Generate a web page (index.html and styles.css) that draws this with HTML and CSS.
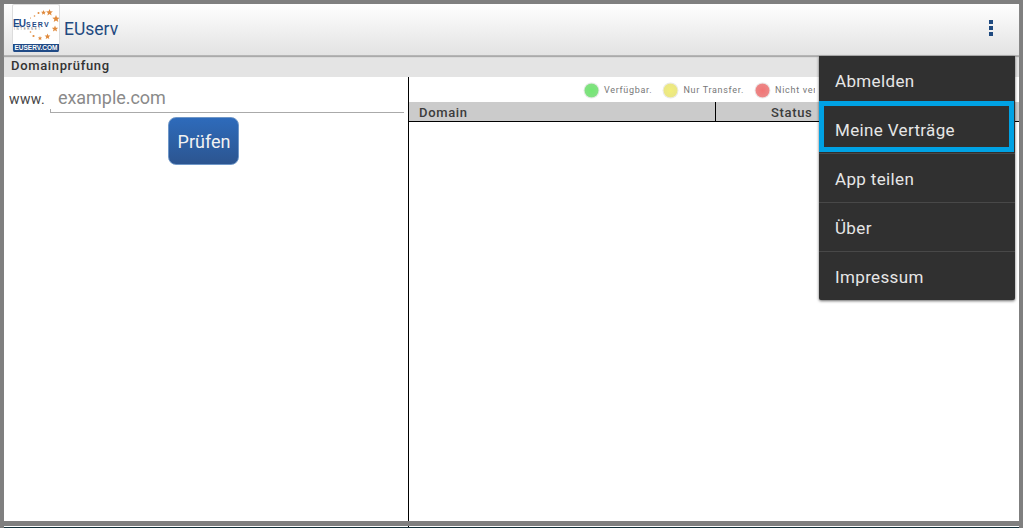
FILE: index.html
```html
<!DOCTYPE html>
<html lang="de">
<head>
<meta charset="utf-8">
<title>EUserv</title>
<link rel="stylesheet" href="styles.css">
</head>
<body>
<div class="screen">
  <header class="actionbar">
    <div class="logo">
      <div class="logo-main">
        <svg class="logo-stars" viewBox="0 0 48 40" width="48" height="40" aria-hidden="true">
          <g fill="#e08a3c">
            <path d="M37.5 5l.9 2.3 2.5.1-1.9 1.6.6 2.4-2.1-1.3-2.1 1.3.6-2.4-1.9-1.6 2.5-.1z"/>
            <path d="M31.5 6l.7 1.7 1.8.1-1.4 1.2.5 1.8-1.6-1-1.6 1 .5-1.8-1.4-1.2 1.8-.1z"/>
            <path d="M44 11l1 2.500 2.700.2-2.100 1.700.7 2.600-2.300-1.400-2.300 1.400.7-2.600-2.100-1.700 2.700-.2z"/>
            <path d="M43 21.500l.9 2.200 2.400.1-1.900 1.500.7 2.300-2.100-1.300-2.100 1.300.7-2.300-1.900-1.500 2.400-.1z"/>
            <path d="M35.500 29.500l.8 2 2.100.1-1.600 1.400.5 2-1.800-1.100-1.800 1.100.5-2-1.600-1.400 2.100-.1z"/>
            <path d="M28 32l.6 1.500 1.600.1-1.200 1 .4 1.600-1.400-.9-1.400.9.400-1.600-1.200-1 1.600-.1z"/>
            <circle cx="26.500" cy="9" r="1"/>
            <circle cx="22.500" cy="12" r=".8"/>
            <circle cx="18.500" cy="14" r=".6"/>
            <circle cx="21.500" cy="32" r="1.100"/>
            <circle cx="18.500" cy="28" r=".8"/>
          </g>
        </svg>
        <span class="logo-eu">EU</span><span class="logo-serv">SERV</span>
        <span class="logo-sub">INTERNET</span>
      </div>
      <div class="logo-foot">EUSERV.COM</div>
    </div>
    <span class="app-title">EUserv</span>
    <span class="overflow" aria-label="Menü"><i></i><i></i><i></i></span>
  </header>
  <div class="section-title">Domainprüfung</div>
  <main class="panes">
    <section class="left">
      <div class="domain-row">
        <span class="www">www.</span>
        <span class="field">example.com</span>
      </div>
      <div class="button-row"><span class="check">Prüfen</span></div>
    </section>
    <section class="right">
      <div class="legend">
        <span class="dot green"></span><span class="legend-text">Verfügbar.</span>
        <span class="dot yellow"></span><span class="legend-text">Nur Transfer.</span>
        <span class="dot red"></span><span class="legend-text clipped">Nicht verfügbar.</span>
      </div>
      <div class="table-head">
        <span class="col-domain">Domain</span>
        <span class="col-status">Status</span>
      </div>
    </section>
  </main>
  <nav class="menu">
    <div class="menu-item first">Abmelden</div>
    <div class="menu-item focused">Meine Verträge</div>
    <div class="menu-item">App teilen</div>
    <div class="menu-item">Über</div>
    <div class="menu-item">Impressum</div>
  </nav>
</div>
<div class="bottom-edge"><span class="edge-tick"></span></div>
</body>
</html>
```

FILE: styles.css
```css
* { box-sizing: border-box; }
html, body { margin: 0; height: 100%; overflow: hidden; }
body {
  width: 1023px;
  height: 528px;
  background: #7f7f7f;
  padding: 4px 4px 0;
  font-family: Roboto, "Liberation Sans", sans-serif;
  color: #333;
}
.screen {
  position: relative;
  width: 1015px;
  height: 517px;
  background: #fff;
  display: flex;
  flex-direction: column;
}
.actionbar {
  height: 52px;
  flex: none;
  display: flex;
  align-items: flex-start;
  padding-left: 8px;
  background: linear-gradient(#fefefe, #e3e3e3);
  border-bottom: 1px solid #b5b5b5;
  box-shadow: 0 1px 1px #aaa;
  position: relative;
}
.logo {
  width: 48px;
  height: 48px;
  flex: none;
  border: 1px solid #dcdcdc;
  border-bottom: 0;
  background: #fff;
  display: flex;
  flex-direction: column;
  overflow: hidden;
  border-radius: 2px;
}
.logo-main {
  flex: 1;
  position: relative;
  font-family: "Liberation Sans", sans-serif;
  font-weight: 700;
  color: #1f4a86;
  line-height: 8px;
  padding: 13px 0 0;
  white-space: nowrap;
}
.logo-stars { position: absolute; left: -1px; top: -1px; }
.logo-eu { font-size: 10px; letter-spacing: -1px; }
.logo-serv { font-size: 7px; letter-spacing: 1.300px; margin-left: 1px; }
.logo-sub {
  position: absolute;
  left: 1px;
  top: 22px;
  font-size: 3px;
  line-height: 4px;
  letter-spacing: 1.600px;
  font-weight: 400;
  color: #777;
}
.logo-foot {
  height: 8px;
  background: #1f4a86;
  color: #fff;
  font: 700 6.500px/8px "Liberation Sans", sans-serif;
  text-align: center;
  white-space: nowrap;
  border-radius: 0 0 2px 2px;
  margin: 0 -1px;
}
.app-title {
  margin-left: 4px;
  font-size: 17.500px;
  line-height: 50px;
  color: #1f4a80;
}
.overflow {
  margin-left: auto;
  margin-right: 26px;
  padding-top: 16px;
  display: flex;
  flex-direction: column;
  gap: 2px;
}
.overflow i {
  display: block;
  width: 4px;
  height: 4px;
  background: #1f4a80;
}
.section-title {
  height: 21px;
  flex: none;
  padding-left: 7px;
  background: #e4e4e4;
  font-size: 13px;
  font-weight: 500;
  line-height: 20px;
  letter-spacing: .65px;
  color: #333;
}
.panes {
  flex: 1;
  display: flex;
  min-height: 0;
}
.left {
  width: 405px;
  flex: none;
  border-right: 1px solid #000;
}
.domain-row {
  display: flex;
  align-items: flex-end;
  padding: 8px 0 0 5px;
}
.www {
  width: 41px;
  flex: none;
  font-size: 14px;
  line-height: 20px;
  padding-bottom: 4px;
  color: #444;
  letter-spacing: .4px;
}
.field {
  width: 354px;
  height: 28px;
  padding-left: 8px;
  font-size: 18px;
  line-height: 25px;
  letter-spacing: -.05px;
  color: #8a8a8a;
  border-bottom: 1px solid #aaa;
  position: relative;
}
.field::before {
  content: "";
  position: absolute;
  left: 0;
  bottom: 0;
  height: 3px;
  border-left: 1px solid #aaa;
}
.button-row {
  display: flex;
  justify-content: center;
  padding-top: 4px;
  padding-right: 6px;
}
.check {
  width: 71px;
  height: 48px;
  border-radius: 8px;
  background: linear-gradient(#2e6bbb, #2c5590);
  border: 1px solid #6f97c8;
  color: #f2f2f2;
  font-size: 18px;
  line-height: 48px;
  padding-left: 2px;
  text-align: center;
}
.right {
  flex: 1;
  min-width: 0;
  overflow: hidden;
}
.legend {
  height: 25px;
  width: 406px;
  display: flex;
  align-items: center;
  padding: 1px 0 0 175px;
  white-space: nowrap;
  font-size: 9px;
  letter-spacing: .7px;
  color: #777;
  overflow: hidden;
}
.dot {
  width: 15px;
  height: 15px;
  border-radius: 50%;
  flex: none;
  margin-right: 5px;
  box-shadow: 0 0 0 1px #e8e8e8;
  transform: scale(.94);
}
.green { background: radial-gradient(#72e872, #8bdc8b); }
.yellow { background: radial-gradient(#f2ee7a, #e6e28c); }
.red { background: radial-gradient(#f27474, #e89090); }
.legend-text { margin-right: 11px; flex: none; }
.legend-text.clipped { margin-right: 0; flex: 1; min-width: 0; overflow: hidden; }
.table-head {
  height: 20px;
  display: flex;
  background: #cbcbcb;
  border-bottom: 1px solid #000;
  font-size: 13px;
  font-weight: 500;
  letter-spacing: .65px;
  line-height: 21px;
  color: #3c3c3c;
}
.col-domain {
  width: 307px;
  flex: none;
  padding-left: 10px;
  border-right: 1px solid #000;
}
.col-status {
  flex: 1;
  padding-left: 55px;
}
.menu {
  position: absolute;
  left: 815px;
  top: 52px;
  width: 196px;
  height: 244px;
  background: #303030;
  box-shadow: 0 1px 3px rgba(0,0,0,.6);
  border-radius: 0 0 2px 2px;
}
.menu-item {
  height: 49px;
  padding-left: 16px;
  font-size: 17px;
  letter-spacing: .35px;
  line-height: 50px;
  color: #e6e6e6;
  border-top: 1px solid #484848;
}
.menu-item.first {
  height: 45px;
  border-top: 0;
}
.menu-item.focused {
  height: 51px;
  width: 195px;
  margin-bottom: 1px;
  border: 5px solid #00a2e4;
  padding-left: 11px;
  line-height: 48px;
}
.bottom-edge {
  height: 2px;
  margin-top: 5px;
  background: #fff;
  border-bottom: 1px solid #12303a;
  display: flex;
}
.edge-tick {
  width: 1px;
  height: 1px;
  margin-left: 404px;
  background: #000;
}
```
